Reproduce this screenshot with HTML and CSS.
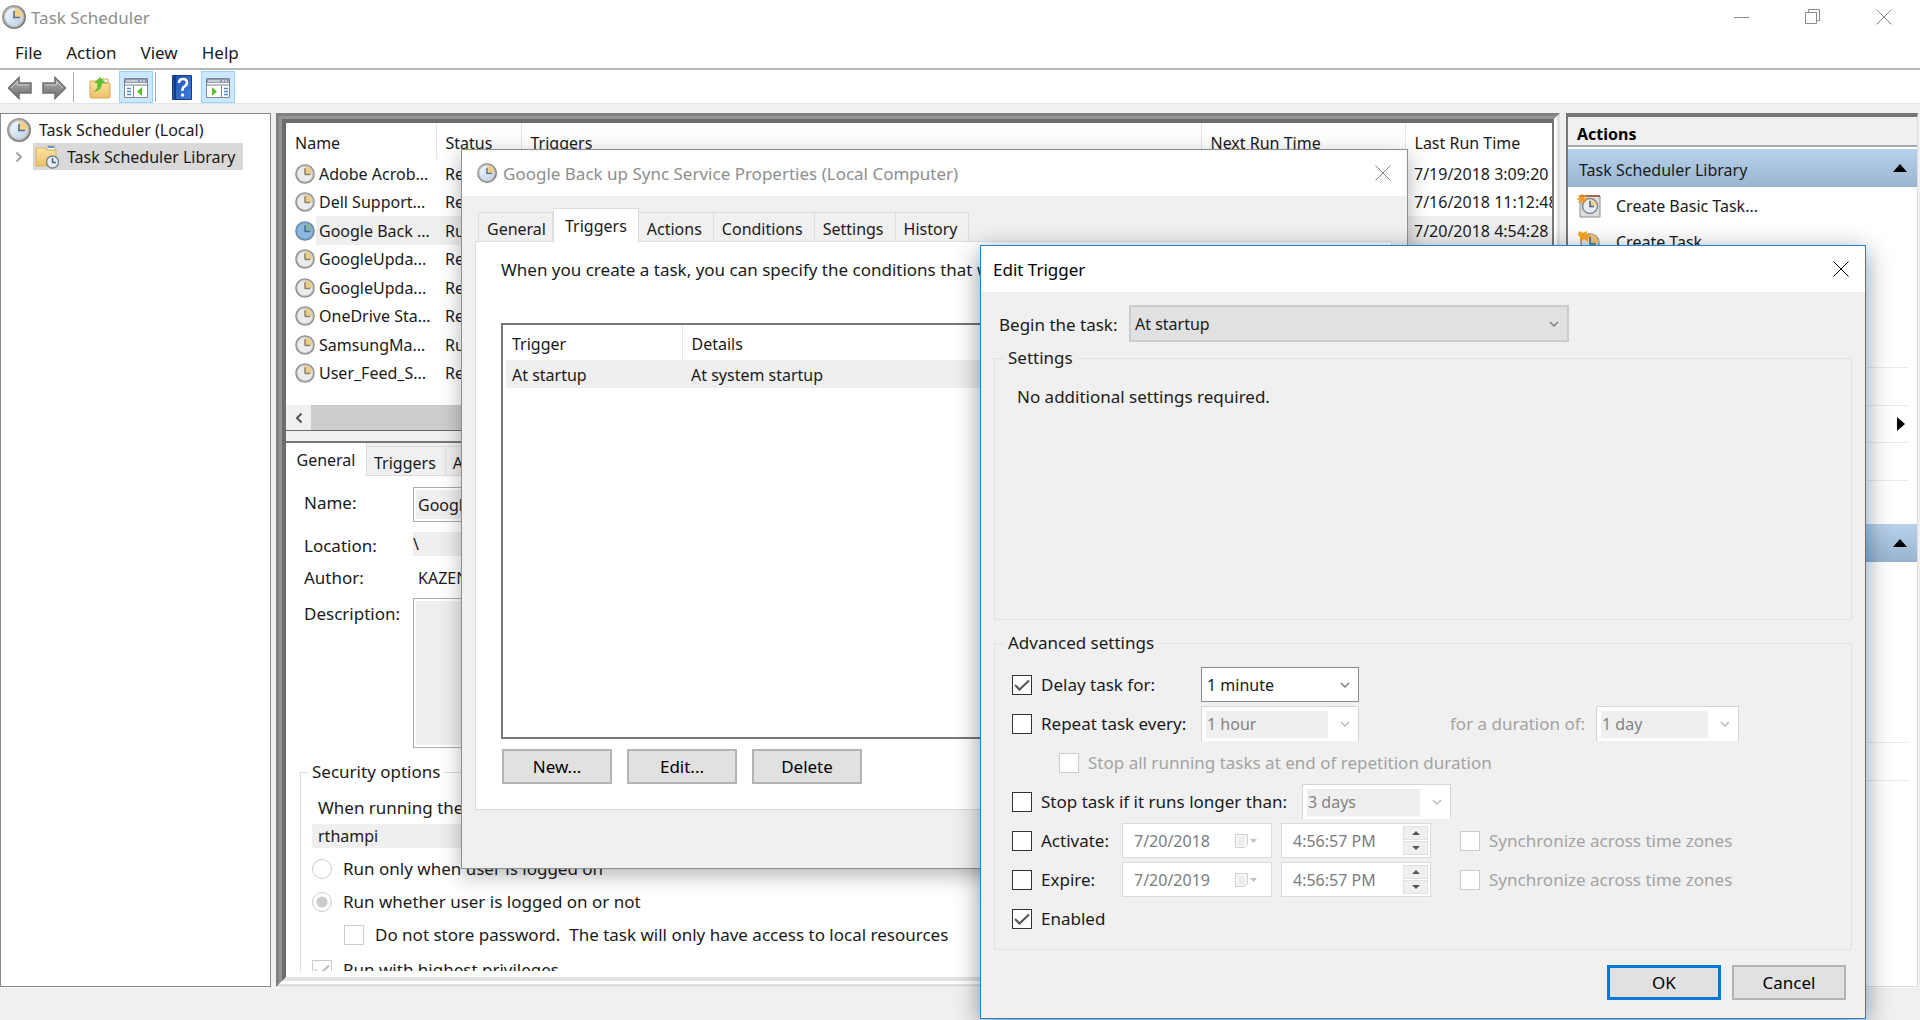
FILE: index.html
```html
<!DOCTYPE html>
<html lang="en">
<head>
<meta charset="utf-8">
<title>Task Scheduler</title>
<link rel="stylesheet" href="styles.css">
</head>
<body>
<svg class="defs" aria-hidden="true">
  <defs>
    <linearGradient id="rim" x1="0" y1="0" x2="1" y2="1"><stop offset="0" stop-color="#a8a8a8"/><stop offset="1" stop-color="#6e6e6e"/></linearGradient>
    <linearGradient id="face" x1="0" y1="0" x2="1" y2="1"><stop offset="0" stop-color="#f4f9ff"/><stop offset="1" stop-color="#b9cfe6"/></linearGradient>
    <linearGradient id="folder" x1="0" y1="0" x2="0" y2="1"><stop offset="0" stop-color="#fbe3a0"/><stop offset="1" stop-color="#efc169"/></linearGradient>
    <linearGradient id="steel" x1="0" y1="0" x2="0" y2="1"><stop offset="0" stop-color="#b5b5b5"/><stop offset="1" stop-color="#6c6c6c"/></linearGradient>
    <linearGradient id="book" x1="0" y1="0" x2="1" y2="1"><stop offset="0" stop-color="#1c4fa8"/><stop offset="1" stop-color="#3f7fe0"/></linearGradient>
    <symbol id="clock" viewBox="0 0 24 24">
      <circle cx="12" cy="12" r="12" fill="url(#rim)"/><circle cx="12" cy="12" r="10.400" fill="#bcbcbc"/>
      <circle cx="12" cy="12" r="9" fill="url(#face)"/><path d="M12 12V3A9 9 0 0 1 21 12Z" fill="#f3cf83"/>
      <path d="M12 6v7M11 12.500h7" stroke="#4d6f94" stroke-width="1.600" fill="none"/>
    </symbol>
    <symbol id="clock-gray" viewBox="0 0 24 24">
      <circle cx="12" cy="12" r="11.800" fill="#8f8f8f"/><circle cx="12" cy="12" r="10.200" fill="#c8c8c8"/>
      <circle cx="12" cy="12" r="8.800" fill="#ececec"/><path d="M12 12V3.200A8.800 8.800 0 0 1 20.800 12Z" fill="#efcd84"/>
      <path d="M12 5v8M12 12.500h6.500" stroke="#8a8070" stroke-width="1.800" fill="none"/>
    </symbol>
    <symbol id="clock-blue" viewBox="0 0 24 24">
      <circle cx="12" cy="12" r="11.800" fill="#6787a8"/><circle cx="12" cy="12" r="10.200" fill="#86a8c8"/>
      <circle cx="12" cy="12" r="8.800" fill="#8fb8e0"/><path d="M12 12V3.200A8.800 8.800 0 0 1 20.800 12Z" fill="#86b5a0"/>
      <path d="M12 5v8M12 12.500h6.500" stroke="#3f6c9a" stroke-width="1.800" fill="none"/>
    </symbol>
    <symbol id="close" viewBox="0 0 16 16"><path d="M.5.5l15 15M15.500.5l-15 15" stroke="currentColor" fill="none"/></symbol>
    <symbol id="arrow" viewBox="0 0 26 24"><path d="M1.500 12L12 1.500V7h12v10H12v5.500Z" fill="url(#steel)" stroke="#6f6f6f" stroke-width="1.500"/><path d="M4 12l6.500-6.500V9H22" fill="none" stroke="#c9c9c9"/></symbol>
    <symbol id="panes" viewBox="0 0 24 20">
      <path d="M.5.5h23v19H.5z" fill="#fff" stroke="#7e8792"/><path d="M1 1h22v4H1z" fill="#8d9bb0"/><path d="M2 3h12M16 3h2M19 3h2" stroke="#fff" stroke-width="1"/>
      <path d="M1 6h22v2H1z" fill="#b9bec6"/><path d="M9.500 8v12" stroke="#7e8792"/><path d="M3 10.500h4M3 13.500h4M3 16.500h4" stroke="#4d8cc8" stroke-width="1.500"/>
      <path d="M18 9v9l-5-4.500z" fill="#5cbf2a"/>
    </symbol>
    <symbol id="panes-right" viewBox="0 0 24 20">
      <path d="M.5.5h23v19H.5z" fill="#fff" stroke="#7e8792"/><path d="M1 1h22v4H1z" fill="#8d9bb0"/><path d="M2 3h12M16 3h2M19 3h2" stroke="#fff" stroke-width="1"/>
      <path d="M1 6h22v2H1z" fill="#b9bec6"/><path d="M15.500 8v12" stroke="#7e8792"/><path d="M18 10.500h4M18 13.500h4M18 16.500h4" stroke="#4d8cc8" stroke-width="1.500"/>
      <path d="M6 9v9l5-4.500z" fill="#5cbf2a"/>
    </symbol>
    <symbol id="calendar" viewBox="0 0 22 14"><path d="M.5.5h12v10l-3 3h-9z" fill="#f7f7f7" stroke="#d0d0d0"/><path d="M3 4h7M3 7h7M3 10h5M5 2v10M8 2v10" stroke="#e6e6e6"/><path d="M15 5h7l-3.500 4z" fill="#c0c0c0"/></symbol>
  </defs>
</svg>

<header class="titlebar">
  <svg class="icon-24"><use href="#clock"/></svg>
  <h1 class="title">Task Scheduler</h1>
  <div class="window-buttons">
    <button aria-label="Minimize"><svg class="icon-16" viewBox="0 0 16 16"><path d="M0 8.500h15" stroke="currentColor"/></svg></button>
    <button aria-label="Restore"><svg class="icon-16" viewBox="0 0 16 16"><path d="M.5 3.500h11v11H.5zM3.500 3V.5h11v11H12" fill="none" stroke="currentColor"/></svg></button>
    <button aria-label="Close"><svg class="icon-16"><use href="#close"/></svg></button>
  </div>
</header>
<nav class="menubar"><button>File</button><button>Action</button><button>View</button><button>Help</button></nav>
<div class="toolbar">
  <button aria-label="Back"><svg width="26" height="24"><use href="#arrow"/></svg></button>
  <button aria-label="Forward"><svg class="flip" width="26" height="24"><use href="#arrow"/></svg></button>
  <span class="separator"></span>
  <button class="wide" aria-label="Up one level"><svg width="24" height="24" viewBox="0 0 24 24"><path d="M2 5h8l2 2h9q1 0 1 1v13q0 1-1 1H3q-1 0-1-1z" fill="url(#folder)" stroke="#d8a951"/><path d="M14 3h6v4h-6z" fill="#f8f8f8" stroke="#c9a45b"/><path d="M4 16c5-1 6-5 5-9H6l6-6 6 6h-4c0 6-4 9-10 9z" fill="#5fc035"/></svg></button>
  <button class="on" aria-label="Console tree"><svg width="24" height="20"><use href="#panes"/></svg></button>
  <span class="separator"></span>
  <button class="wide" aria-label="Help"><svg width="20" height="25" viewBox="0 0 20 25"><path d="M.5.5h19v24H.5z" fill="url(#book)" stroke="#173b80"/><path d="M3 1v23" stroke="#123a86" stroke-width="2"/><path d="M7 8q0-4 4-4t4 3.500q0 2.500-2.500 4T10.500 16" fill="none" stroke="#fff" stroke-width="2.600"/><circle cx="10.500" cy="20" r="1.700" fill="#fff"/></svg></button>
  <button class="on" aria-label="Action pane"><svg width="24" height="20"><use href="#panes-right"/></svg></button>
</div>

<main class="workspace">
  <aside class="tree">
    <div class="tree-row"><svg class="icon-24"><use href="#clock"/></svg><span>Task Scheduler (Local)</span></div>
    <div class="tree-row child">
      <svg width="8" height="12" viewBox="0 0 8 12"><path d="M1.500 1.500L6 6l-4.500 4.500" fill="none" stroke="#a0a0a0" stroke-width="2"/></svg>
      <span class="selected"><svg class="icon-24" viewBox="0 0 24 24"><path d="M1 3h9l2 2h9v16H1z" fill="url(#folder)" stroke="#dcb25c"/><path d="M12 1h8v4h-8z" fill="#fff" stroke="#c9b173"/><path d="M13 2h6" stroke="#5a97d3" stroke-width="2"/><circle cx="17.500" cy="17" r="6" fill="#e9eef3" stroke="#7d8790" stroke-width="1.500"/><path d="M17.500 13v4.500H21" fill="none" stroke="#3f6186" stroke-width="1.500"/></svg>Task Scheduler Library</span>
    </div>
  </aside>

  <div class="frame"><div class="frame-mid"><div class="frame-in">
    <section class="task-list">
      <table class="tasks">
        <colgroup><col class="c-name"><col class="c-status"><col><col class="c-next"><col class="c-last"></colgroup>
        <thead><tr><th>Name</th><th>Status</th><th>Triggers</th><th>Next Run Time</th><th>Last Run Time</th></tr></thead>
        <tbody>
          <tr><td><svg class="icon-20"><use href="#clock-gray"/></svg>Adobe Acrob...</td><td>Ready</td><td></td><td></td><td>7/19/2018 3:09:20</td></tr>
          <tr><td><svg class="icon-20"><use href="#clock-gray"/></svg>Dell Support...</td><td>Ready</td><td></td><td></td><td>7/16/2018 11:12:48</td></tr>
          <tr class="current"><td><svg class="icon-20"><use href="#clock-blue"/></svg>Google Back ...</td><td>Running</td><td></td><td></td><td>7/20/2018 4:54:28</td></tr>
          <tr><td><svg class="icon-20"><use href="#clock-gray"/></svg>GoogleUpda...</td><td>Ready</td><td></td><td></td><td></td></tr>
          <tr><td><svg class="icon-20"><use href="#clock-gray"/></svg>GoogleUpda...</td><td>Ready</td><td></td><td></td><td></td></tr>
          <tr><td><svg class="icon-20"><use href="#clock-gray"/></svg>OneDrive Sta...</td><td>Ready</td><td></td><td></td><td></td></tr>
          <tr><td><svg class="icon-20"><use href="#clock-gray"/></svg>SamsungMa...</td><td>Running</td><td></td><td></td><td></td></tr>
          <tr><td><svg class="icon-20"><use href="#clock-gray"/></svg>User_Feed_S...</td><td>Ready</td><td></td><td></td><td></td></tr>
        </tbody>
      </table>
      <div class="scrollbar"><button aria-label="Scroll left"><svg width="8" height="12" viewBox="0 0 8 12"><path d="M6.500 1.500L2 6l4.500 4.500" fill="none" stroke="#555" stroke-width="2"/></svg></button><span class="thumb"></span></div>
    </section>
    <div class="splitter"></div>
    <section class="details">
      <div class="tabs low"><button class="active">General</button><button>Triggers</button><button>Actions</button></div>
      <div class="details-body">
        <div class="form-row name"><label for="task-name">Name:</label><input id="task-name" value="Google Back up Sync Service" readonly></div>
        <div class="form-row location"><label for="task-location">Location:</label><input id="task-location" value="\" readonly></div>
        <div class="form-row author"><span>Author:</span><span class="value">KAZEN</span></div>
        <div class="form-row description"><label for="task-desc">Description:</label><textarea id="task-desc" readonly></textarea></div>
        <fieldset class="security">
          <legend>Security options</legend>
          <p class="account-label">When running the task</p>
          <p class="account">rthampi</p>
          <label class="option"><input type="radio" name="run" disabled>Run only when user is logged on</label>
          <label class="option"><input type="radio" name="run" checked disabled>Run whether user is logged on or not</label>
          <label class="option nested"><input type="checkbox" disabled>Do not store password.&nbsp; The task will only have access to local resources</label>
          <label class="option last"><input type="checkbox" checked disabled>Run with highest privileges</label>
        </fieldset>
      </div>
    </section>
  </div></div></div>

  <aside class="actions">
    <h2>Actions</h2>
    <div class="actions-head"><span>Task Scheduler Library</span><svg width="14" height="8" viewBox="0 0 14 8"><path d="M7 0l7 8H0z"/></svg></div>
    <ul class="plain">
      <li><svg class="icon-24" viewBox="0 0 24 24"><path d="M3 2h20v21H3z" fill="#dedede" stroke="#8d8d8d"/><path d="M3 2h20" stroke="#a06a50" stroke-width="2"/><circle cx="13" cy="12" r="7.500" fill="#e6edf5" stroke="#7d8790" stroke-width="1.500"/><path d="M13 12V5.500A6.500 6.500 0 0 1 19.500 12z" fill="#f3d48e"/><path d="M13 7v5.500h4" fill="none" stroke="#3f6186" stroke-width="1.500"/><path d="M5 0v10M0 5h10M1.500 1.500l7 7M8.500 1.500l-7 7" stroke="#f29a1f" stroke-width="1.500"/></svg>Create Basic Task...</li>
      <li><svg class="icon-24" viewBox="0 0 24 24"><circle cx="13" cy="13" r="9" fill="#e8e8e8" stroke="#8b8b8b" stroke-width="1.500"/><path d="M13 13V4a9 9 0 0 1 9 9z" fill="#efc776"/><path d="M13 7v7h6" fill="none" stroke="#3f6186" stroke-width="1.500"/><path d="M2 1l4 2 4-2v3l4 2-3 2v4L7 9l-4 3V7L1 5z" fill="#f8a51f"/></svg>Create Task...</li>
      <li></li><li></li><li></li>
    </ul>
    <ul class="ruled"><li></li><li><svg width="8" height="14" viewBox="0 0 8 14"><path d="M0 0l8 7-8 7z"/></svg></li><li></li><li></li></ul>
    <div class="actions-head"><span></span><svg width="14" height="8" viewBox="0 0 14 8"><path d="M7 0l7 8H0z"/></svg></div>
    <ul class="plain"><li></li><li></li><li></li><li></li><li></li></ul>
    <ul class="ruled"><li></li><li></li></ul>
  </aside>
</main>
<footer class="statusbar"></footer>

<section class="dialog properties" aria-label="Task properties">
  <header class="dialog-title"><svg class="icon-20"><use href="#clock"/></svg><h2>Google Back up Sync Service Properties (Local Computer)</h2><button aria-label="Close"><svg class="icon-16"><use href="#close"/></svg></button></header>
  <div class="tabs"><button>General</button><button class="active">Triggers</button><button>Actions</button><button>Conditions</button><button>Settings</button><button>History</button></div>
  <div class="tab-page">
    <p>When you create a task, you can specify the conditions that will trigger the task.</p>
    <div class="trigger-list">
      <table>
        <colgroup><col class="c-trigger"><col></colgroup>
        <thead><tr><th>Trigger</th><th>Details</th></tr></thead>
        <tbody><tr><td>At startup</td><td>At system startup</td></tr></tbody>
      </table>
    </div>
    <div class="buttons"><button class="push">New...</button><button class="push">Edit...</button><button class="push">Delete</button></div>
  </div>
</section>

<section class="dialog edit" aria-label="Edit Trigger">
  <header class="dialog-title"><h2>Edit Trigger</h2><button aria-label="Close"><svg class="icon-16"><use href="#close"/></svg></button></header>
  <form class="edit-body">
    <div class="begin"><label for="begin">Begin the task:</label><select id="begin"><option>At startup</option></select></div>
    <fieldset class="group settings"><legend>Settings</legend><p>No additional settings required.</p></fieldset>
    <fieldset class="group advanced">
      <legend>Advanced settings</legend>
      <div class="row"><label class="check w-delay"><input type="checkbox" checked>Delay task for:</label><select class="delay" aria-label="Delay"><option>1 minute</option></select></div>
      <div class="row"><label class="check w-delay"><input type="checkbox">Repeat task every:</label><select class="delay" aria-label="Repeat interval" disabled><option>1 hour</option></select><label class="muted duration-label" for="duration">for a duration of:</label><select id="duration" class="duration" disabled><option>1 day</option></select></div>
      <div class="row inset"><label class="check muted"><input type="checkbox" disabled>Stop all running tasks at end of repetition duration</label></div>
      <div class="row"><label class="check w-stop"><input type="checkbox">Stop task if it runs longer than:</label><select class="limit" aria-label="Time limit" disabled><option>3 days</option></select></div>
      <div class="row"><label class="check w-date"><input type="checkbox">Activate:</label>
        <span class="picker"><input value="7/20/2018" aria-label="Activate date" disabled><svg width="22" height="14"><use href="#calendar"/></svg></span>
        <span class="picker"><input value="4:56:57 PM" aria-label="Activate time" disabled><span class="spin"><button type="button" aria-label="Up"><svg width="8" height="4" viewBox="0 0 8 4"><path d="M4 0l4 4H0z"/></svg></button><button type="button" aria-label="Down"><svg width="8" height="4" viewBox="0 0 8 4"><path d="M0 0h8L4 4z"/></svg></button></span></span>
        <label class="check muted sync"><input type="checkbox" disabled>Synchronize across time zones</label></div>
      <div class="row"><label class="check w-date"><input type="checkbox">Expire:</label>
        <span class="picker"><input value="7/20/2019" aria-label="Expire date" disabled><svg width="22" height="14"><use href="#calendar"/></svg></span>
        <span class="picker"><input value="4:56:57 PM" aria-label="Expire time" disabled><span class="spin"><button type="button" aria-label="Up"><svg width="8" height="4" viewBox="0 0 8 4"><path d="M4 0l4 4H0z"/></svg></button><button type="button" aria-label="Down"><svg width="8" height="4" viewBox="0 0 8 4"><path d="M0 0h8L4 4z"/></svg></button></span></span>
        <label class="check muted sync"><input type="checkbox" disabled>Synchronize across time zones</label></div>
      <div class="row"><label class="check"><input type="checkbox" checked>Enabled</label></div>
    </fieldset>
    <div class="footer-buttons"><button type="button" class="push primary">OK</button><button type="button" class="push">Cancel</button></div>
  </form>
</section>
</body>
</html>
```
FILE: styles.css
```css
* { box-sizing: border-box; }
body {
  margin: 0;
  height: 100vh;
  display: flex;
  flex-direction: column;
  overflow: hidden;
  position: relative;
  background: #f0f0f0;
  color: #1a1a1a;
  font: 16px/24px "Noto Sans", "Open Sans", sans-serif;
}
h1, h2, p, ul, fieldset { margin: 0; padding: 0; font-size: 16px; font-weight: 400; }
ul { list-style: none; }
fieldset { min-width: 0; border: 1px solid #dcdcdc; }
button, input, select, textarea { font: inherit; color: inherit; margin: 0; padding: 0; border: 0; border-radius: 0; background: none; }
button { white-space: nowrap; }
svg { flex: none; display: block; }
.defs { position: absolute; width: 0; height: 0; }
.icon-24 { width: 24px; height: 24px; }
.icon-20 { width: 20px; height: 20px; }
.icon-16 { width: 16px; height: 16px; }
.title, .menubar button, .dialog-title h2, .tab-page p, .push, .form-row > :first-child, .option, .account-label, .check, .muted, .begin label, legend, .settings p { font-size: 17px; }

.titlebar { flex: none; height: 36px; display: flex; align-items: center; gap: 5px; padding: 0 1px 2px 2px; background: #fff; }
.title { color: #8e8e8e; padding-top: 2px; }
.window-buttons { display: flex; margin-left: auto; color: #8a8a8a; }
.window-buttons button { width: 71px; height: 32px; display: grid; place-items: center; }
.menubar { flex: none; height: 34px; display: flex; align-items: center; gap: 24px; padding: 1px 15px 0; background: #fff; border-bottom: 2px solid #b4b8bb; }
.toolbar { flex: none; height: 34px; display: flex; align-items: center; background: #fff; border-bottom: 1px solid #e4e4e4; padding-left: 3px; }
.toolbar button { width: 34px; height: 32px; display: grid; place-items: center; padding-top: 2px; }
.toolbar .wide { width: 44px; padding-left: 5px; margin-left: 1px; }
.toolbar .on { background: #cce8ff; border: 1px solid #99d1ff; }
.toolbar .separator { width: 1px; height: 30px; background: #aaa; margin-left: 2px; }
.flip { transform: scaleX(-1); }

.workspace { flex: 1; min-height: 0; display: grid; grid-template-columns: 271px minmax(0, 1fr) 352px; column-gap: 6px; padding: 9px 2px 0 0; }
.tree { background: #fff; border: 1px solid #828790; padding: 4px 6px; }
.tree-row { display: flex; align-items: center; gap: 8px; height: 24px; white-space: nowrap; }
.tree-row.child { height: 29px; padding-left: 8px; gap: 10px; }
.selected { display: flex; align-items: center; gap: 8px; height: 27px; padding: 0 8px 0 2px; background: #d9d9d9; }

.frame, .frame-mid, .frame-in { border-style: solid; display: flex; flex-direction: column; flex: 1; min-height: 0; min-width: 0; }
.frame { border-width: 3px; border-color: #808080 #e0e0e0 #e0e0e0 #808080; margin-left: -1px; }
.frame-mid { border-width: 3px; border-color: #949494 #fff #fff #949494; }
.frame-in { border-width: 4px 2px 4px 4px; border-color: #6c6c6c #777 #e3e3e3 #6c6c6c; background: #fff; }
.task-list { flex: none; height: 307px; display: flex; flex-direction: column; overflow: hidden; }
table { border-collapse: collapse; table-layout: fixed; }
th, td { font-weight: 400; text-align: left; white-space: nowrap; padding: 0; }
.tasks { width: 100%; }
.c-name { width: 150px; } .c-status { width: 85px; } .c-next { width: 204px; } .c-last { width: 147px; }
.tasks th { height: 36px; padding-left: 9px; border-right: 1px solid #e5e5e5; padding-top: 4px; }
.tasks th:last-child { border-right: 0; }
.tasks td { height: 29px; line-height: 28px; padding-left: 9px; }
.tasks tr:nth-child(even) td { height: 28px; }
.tasks td svg { float: left; margin: 4px 4px 0 0; }
.current td { background: #efefef; }
.current td:first-child { background: linear-gradient(90deg, #fff 30px, #efefef 30px); }
.scrollbar { margin-top: auto; height: 25px; display: flex; background: #f0f0f0; }
.scrollbar button { width: 25px; display: grid; place-items: center; }
.thumb { flex: 1; background: #cdcdcd; }
.splitter { flex: none; height: 13px; background: #f0f0f0; border-top: 1px solid #696969; border-bottom: 2px solid #777; }
.details { flex: 1; min-height: 0; overflow: hidden; display: flex; flex-direction: column; margin-bottom: 6px; }

.tabs { display: flex; align-items: flex-end; height: 34px; }
.tabs button { height: 30px; background: #f0f0f0; border: 1px solid #dcdcdc; border-left: 0; padding: 4px 11px 0 8px; flex: none; }
.tabs button:first-child { border-left: 1px solid #dcdcdc; padding-right: 6px; }
.tabs .active { height: 35px; background: #fff; border-bottom-color: #fff; padding: 2px 11px 2px; position: relative; margin-bottom: -1px; border-left: 1px solid #dcdcdc; }
.low { background: #f0f0f0; flex: none; height: 33px; }
.low .active, .low .active:first-child { border-left: 0; width: 81px; padding: 2px 8px; }
.low button + button { padding: 4px 9px 0 7px; }
.details-body { padding: 11px 8px 0 18px; flex: none; background: #fff; }
.form-row { display: flex; width: 700px; }
.form-row > :first-child { width: 109px; flex: none; }
.form-row input, .form-row textarea { flex: 1; background: #efefef; }
.name { height: 35px; margin-bottom: 10px; }
.name label { padding-top: 4px; }
.name input { border: 1px solid #ababab; box-shadow: inset 0 0 0 2px #fff; padding: 0 4px; }
.location { height: 24px; margin-bottom: 10px; }
.location label { padding-top: 2px; }
.author { height: 24px; margin-bottom: 8px; }
.author .value { padding-left: 5px; }
.description { height: 150px; }
.description label { padding-top: 4px; }
.description textarea { border: 1px solid #ababab; box-shadow: inset 0 0 0 2px #fff; resize: none; }
.security { margin: 12px 0 0 -4px; padding: 12px 11px 0; height: 260px; }
.security legend { padding: 0 4px; margin-left: -4px; }
.account-label { padding-left: 6px; margin-bottom: 4px; }
.account { background: #efefef; padding-left: 6px; margin-bottom: 4px; }
.option { display: flex; align-items: center; gap: 11px; height: 33px; }
.option.last { height: 37px; }
.nested { padding-left: 32px; }

input[type="checkbox"], input[type="radio"] { appearance: none; flex: none; width: 20px; height: 20px; background: #fff no-repeat center; border: 1px solid #333; }
input[type="checkbox"]:checked { background-image: url("data:image/svg+xml,%3Csvg xmlns='http://www.w3.org/2000/svg' width='18' height='18'%3E%3Cpath d='M2 9l4.500 4.500 9.500-9' fill='none' stroke='%23555' stroke-width='2'/%3E%3C/svg%3E"); }
input[type="checkbox"]:disabled { border-color: #ccc; }
input[type="checkbox"]:checked:disabled { background-image: url("data:image/svg+xml,%3Csvg xmlns='http://www.w3.org/2000/svg' width='18' height='18'%3E%3Cpath d='M2 9l4.500 4.500 9.500-9' fill='none' stroke='%23bbb' stroke-width='2'/%3E%3C/svg%3E"); }
input[type="radio"] { border-radius: 50%; border-color: #ccc; }
input[type="radio"]:checked { background-image: radial-gradient(circle, #ccc 5px, transparent 6px); }

.actions { display: flex; flex-direction: column; background: #fff; border: 2px solid #777; border-top-width: 4px; border-right: 1px solid #dcdcdc; border-bottom: 1px solid #dcdcdc; overflow: hidden; }
.actions h2 { flex: none; height: 30px; padding: 6px 9px 0; line-height: 22px; font-weight: 700; background: #f0f0f0; border-bottom: 2px solid #a8a8a8; margin-bottom: 2px; color: #000; }
.actions-head { flex: none; height: 38px; display: flex; align-items: center; justify-content: space-between; padding: 3px 10px 0 11px; background: linear-gradient(#b8d2ea, #99b4d1); }
.actions-head svg { margin-bottom: 4px; }
.plain li { height: 36px; display: flex; align-items: center; gap: 15px; padding: 1px 0 0 9px; }
.ruled { margin-right: 8px; }
.ruled li { height: 38px; border-top: 1px solid #ebebeb; display: flex; align-items: center; justify-content: flex-end; padding-right: 4px; }
.ruled li:nth-child(even) { height: 37px; }
.ruled + .actions-head { margin-top: 7px; }
.statusbar { flex: none; height: 33px; border-top: 1px solid #fafafa; }

.dialog { position: absolute; background: #f0f0f0; display: flex; flex-direction: column; }
.properties { left: 461px; top: 149px; width: 947px; height: 720px; border: 1px solid #8f8f8f; box-shadow: 0 6px 20px rgba(0, 0, 0, .3); padding-bottom: 58px; }
.edit { left: 980px; top: 245px; width: 886px; height: 774px; border: 1px solid #1883d7; box-shadow: 0 6px 24px rgba(0, 0, 0, .42); }
.dialog-title { flex: none; height: 46px; display: flex; align-items: center; gap: 6px; padding: 0 16px 0 15px; background: #fff; }
.dialog-title h2 { color: #8e8e8e; padding-top: 1px; }
.dialog-title button { margin-left: auto; margin-bottom: 1px; color: #808080; }
.edit .dialog-title { padding-left: 12px; }
.edit .dialog-title h2, .edit .dialog-title button { color: #000; }
.properties .tabs { margin: 12px 0 0 16px; }
.tab-page { flex: 1; margin: -1px 15px 0 13px; border: 1px solid #dcdcdc; background: #fff; padding: 16px 25px; display: flex; flex-direction: column; }
.trigger-list { margin-top: 41px; height: 416px; border: 2px solid #777; padding-left: 3px; }
.trigger-list table { width: 100%; }
.c-trigger { width: 176px; }
.trigger-list th { height: 35px; padding: 3px 0 0 6px; border-right: 1px solid #e5e5e5; }
.trigger-list td { height: 28px; padding: 2px 0 0 6px; background: #efefef; }
.trigger-list th + th, .trigger-list td + td { padding-left: 9px; }
.buttons { display: flex; gap: 15px; margin-top: 10px; padding-left: 1px; }
.push { width: 110px; height: 35px; background: #e1e1e1; border: 2px solid #b4b4b4; color: #000; }
.primary { border: 3px solid #0078d7; }

.edit-body { padding: 13px 13px; display: flex; flex-direction: column; }
.begin { display: flex; align-items: center; padding-left: 5px; height: 37px; margin-bottom: 4px; }
.begin label { width: 130px; padding-top: 2px; }
select { appearance: none; height: 35px; padding-left: 5px; border: 1px solid #8a8a8a; background: #fff url("data:image/svg+xml,%3Csvg xmlns='http://www.w3.org/2000/svg' width='10' height='6'%3E%3Cpath d='M1 1l4 4 4-4' fill='none' stroke='%23777' stroke-width='1.400'/%3E%3C/svg%3E") no-repeat right 8px center; }
select:disabled { opacity: 1; color: #838383; border-color: #d5d5d5; border-bottom: 0; background: url("data:image/svg+xml,%3Csvg xmlns='http://www.w3.org/2000/svg' width='10' height='6'%3E%3Cpath d='M1 1l4 4 4-4' fill='none' stroke='%23bbb' stroke-width='1.500'/%3E%3C/svg%3E") no-repeat right 8px center, linear-gradient(#efefef, #efefef) 4px 4px / calc(100% - 34px) 27px no-repeat, #fff; }
.begin select { width: 440px; height: 37px; border: 2px solid #ccc; padding-left: 4px; background-color: #e1e1e1; }
.group { border-color: #e2e2e2; }
.group legend { padding: 0 4px; }
.settings { height: 274px; padding: 15px 22px; }
.settings legend { margin-left: -13px; }
.advanced { height: 319px; margin-top: 11px; padding: 12px 17px 0; }
.advanced legend { margin-left: -8px; }
.row { display: flex; align-items: center; height: 35px; margin-bottom: 4px; }
.inset { padding-left: 47px; }
.check { display: flex; align-items: center; gap: 9px; white-space: nowrap; }
.muted { color: #a3a3a3; }
.w-delay { width: 189px; }
.w-stop { width: 290px; }
.w-date { width: 110px; }
.delay { width: 158px; }
.duration-label { margin-left: 91px; width: 146px; }
.duration { width: 143px; }
.limit { width: 149px; }
.picker { width: 150px; height: 35px; display: flex; align-items: center; justify-content: space-between; background: #fff; border: 1px solid #dadada; margin-right: 9px; padding: 2px 2px 2px 11px; }
.picker input { width: 90px; color: #7c7c7c; }
.picker > svg { margin-right: 12px; }
.spin { display: grid; gap: 1px; }
.spin button { width: 25px; height: 14px; display: grid; place-items: center; background: #f0f0f0; border: 1px solid #e0e0e0; fill: #555; }
.sync { margin-left: 20px; }
.footer-buttons { display: flex; justify-content: flex-end; gap: 11px; padding-right: 6px; margin-top: 15px; }
.footer-buttons .push { width: 114px; }
```
